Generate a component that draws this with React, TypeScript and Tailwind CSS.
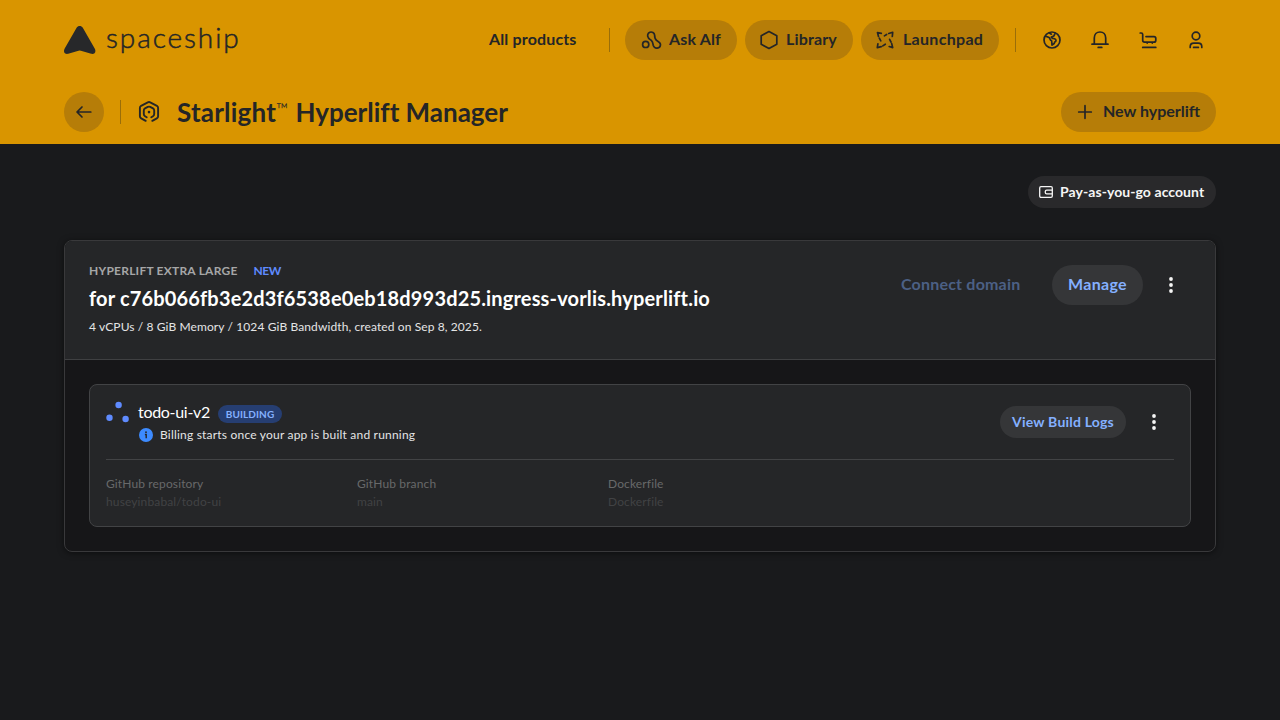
import type { ReactNode } from "react";

function Icon({ children, className = "size-6", box = "0 0 24 24", stroke = 1.7 }: { children: ReactNode; className?: string; box?: string; stroke?: number }) {
  return (
    <svg viewBox={box} className={`shrink-0 ${className}`} fill="none" stroke="currentColor" strokeWidth={stroke} strokeLinecap="round" strokeLinejoin="round">
      {children}
    </svg>
  );
}

function Kebab() {
  return (
    <Icon>
      <g fill="currentColor" stroke="none">
        <circle cx="12" cy="6" r="1.9" />
        <circle cx="12" cy="12" r="1.9" />
        <circle cx="12" cy="18" r="1.9" />
      </g>
    </Icon>
  );
}

function Divider() {
  return <div className="h-6 w-px bg-[#9a6e09]" />;
}

function Header() {
  return (
    <header className="h-36 bg-[#d99500] px-16 text-[#242527]">
      <div className="flex h-20 items-center">
        <svg viewBox="0 0 32 28" className="h-7 w-8 shrink-0 text-[#27282a]" fill="currentColor">
          <path d="M12.6 1.7C14-.5 17.4-.5 18.8 1.7L30.7 22.6C32.600 25.900 30.400 28.600 27.200 27.800L16.900 24.800Q15.700 24.400 14.500 24.800L4.200 27.800C1 28.600-1.200 25.900 .7 22.600Z" />
        </svg>
        <span className="ml-2.5 w-[137px] pb-1.5 text-[28px] leading-8 font-light tracking-[1.920px] whitespace-nowrap [-webkit-text-stroke:0.5px]">spaceship</span>
        <nav className="ml-auto flex items-center whitespace-nowrap">
          <a className="w-[88px] pb-0.5 text-base font-bold tracking-[0.150px]">All products</a>
          <div className="ml-8 mr-[15px]"><Divider /></div>
          <div className="flex gap-2 text-base font-bold">
            <button className="flex h-10 w-28 items-center rounded-full bg-[#b67d08] pl-[15px]">
              <Icon>
                <circle cx="5.700" cy="16.400" r="3.100" />
                <path d="M8.300 9.600A3.500 3.500 0 1 1 14.600 7.100C14.600 9.500 14.600 11.200 16.700 12.500C18.700 13.700 20.500 14.600 20.500 16.700A3.700 3.700 0 0 1 13.300 17.600C12.800 15.800 13.200 14.300 11.500 12.700C10.200 11.500 8.900 11 8.300 9.600Z" />
              </Icon>
              <span className="ml-[5px] pb-0.5 tracking-[0.160px]">Ask Alf</span>
            </button>
            <button className="flex h-10 w-27 items-center rounded-full bg-[#b67d08] pl-3">
              <Icon><path d="M12 3.500L19.800 7.700V16.300L12 20.500L4.200 16.300V7.700Z" /></Icon>
              <span className="ml-[5px] pb-0.5 tracking-[0.160px]">Library</span>
            </button>
            <button className="flex h-10 w-[138px] items-center rounded-full bg-[#b67d08] pl-3">
              <Icon>
                <path d="M8.300 5.300L4.500 4.500L5.500 8.500M6.300 10.200L7.800 12.800" />
                <path d="M19.300 8.500L19.700 4.300L15.700 5.500M13.600 6.500L11.400 7.900" />
                <path d="M16.200 18.500L19.700 19.600L18.700 15.600M18 14L16.600 11.300" />
                <path d="M4.900 15.800L4.300 19.600L8.200 18.600M9.800 17.900L12.300 16.200" />
              </Icon>
              <span className="ml-[6px] pb-0.5 tracking-[0.300px]">Launchpad</span>
            </button>
          </div>
          <div className="mx-4"><Divider /></div>
          <div className="flex items-center gap-6 px-2">
            <Icon>
              <circle cx="12" cy="12" r="8" />
              <path d="M5.500 8.300L8.300 9.100C9.500 9.400 10 10 10.100 11.200L10.700 12.200C12 12.500 11.900 13 11.800 14.200L12 17.200L14.200 15.500L14.700 14C16 13.500 16.300 12.500 15.700 11.600C14.800 10.400 13.600 10.300 12.300 10.400L11.400 9L13.800 8L15 5.600M9.300 5L11.400 6.200" />
            </Icon>
            <Icon><path d="M4 16.200H20M6.300 16V10C6.300 6.300 8.700 4 12 4S17.700 6.300 17.700 10V16M10.200 19.400H13.800" /></Icon>
            <Icon><path d="M4.200 5H5.200Q6.700 5 6.700 6.500V12.300Q6.700 14.200 8.600 14.200H17.800Q19.800 14.200 19.800 12.200V10.400Q19.800 8.600 18 8.600H10M11.200 14.600V15.100M16.300 14.600V15.100M6.700 19.400H19.800" /></Icon>
            <Icon><circle cx="12" cy="8" r="3.800" /><path d="M6.200 19.400V18.700Q6.200 15.100 9.800 15.100H14.200Q17.800 15.100 17.800 18.700V19.400M9.600 19.400H14.400" /></Icon>
          </div>
        </nav>
      </div>
      <div className="flex h-16 items-center">
        <button className="flex size-10 items-center justify-center rounded-full bg-[#b67d08]">
          <Icon><path d="M18.800 12H5.400M10 7L5 12L10 17" /></Icon>
        </button>
        <div className="ml-4"><Divider /></div>
        <div className="ml-4 flex">
          <Icon stroke={1.9}>
            <path d="M8.700 20.800L4.200 18.300Q2.900 17.600 2.900 16.200V7.900Q2.900 6.500 4.100 5.800L10.800 2.300Q12 1.700 13.200 2.300L19.900 5.800Q21.100 6.500 21.100 7.900V16.200Q21.100 17.600 19.800 18.300L15.300 20.800" />
            <path d="M9.700 17.200L8 16.200Q6.800 15.500 6.800 14.100V10.500Q6.800 9.100 8 8.400L10.800 6.900Q12 6.300 13.200 6.900L16 8.400Q17.200 9.100 17.200 10.500V14.100Q17.200 15.500 16 16.200L14.300 17.200" />
            <circle cx="12" cy="12.100" r="1.300" fill="currentColor" stroke="none" />
          </Icon>
        </div>
        <h1 className="ml-4 flex text-[26px] leading-8 font-bold whitespace-nowrap">
          <span className="w-[99px] tracking-[0.200px]">Starlight</span>
          <span className="w-[19.500px] text-[16px] leading-[26px] font-light [-webkit-text-stroke:0.200px]">™</span>
          <span className="tracking-[-0.010px]">Hyperlift Manager</span>
        </h1>
        <button className="ml-auto flex h-10 w-[155px] items-center rounded-full bg-[#b67d08] pl-3 text-base font-bold whitespace-nowrap">
          <Icon><path d="M12 5.700V18.300M5.700 12H18.300" /></Icon>
          <span className="ml-[6px] pb-0.5">New hyperlift</span>
        </button>
      </div>
    </header>
  );
}

const details = [
  { label: "GitHub repository", value: "huseyinbabal/todo-ui" },
  { label: "GitHub branch", value: "main" },
  { label: "Dockerfile", value: "Dockerfile" },
];

export default function App() {
  return (
    <div className="h-screen overflow-hidden bg-[#191a1c] font-['Lato',sans-serif] text-[#f5f5f5]">
      <Header />
      <main className="flex flex-col px-16 pt-8">
        <button className="flex h-8 w-[188px] items-center self-end rounded-full bg-[#29292b] pl-2.5 text-sm font-bold whitespace-nowrap">
          <Icon className="size-4" box="0 0 16 16" stroke={1.3}>
            <rect x="1.700" y="2.700" width="12.600" height="10.600" rx="1.300" />
            <path d="M14.300 6.200H8.700Q7.300 6.200 7.300 7.500V8.500Q7.300 9.800 8.700 9.800H14.300" />
          </Icon>
          <span className="ml-1.5 tracking-[0.070px]">Pay-as-you-go account</span>
        </button>

        <section className="mt-8 h-78 rounded-lg border border-[#39393b] bg-[#161618] shadow-[0_1px_6px_rgba(0,0,0,0.5)]">
          <div className="flex h-[119px] justify-between rounded-t-[7px] border-b border-[#3f4042] bg-[#252628] px-6 whitespace-nowrap">
            <div className="pt-[22px]">
              <div className="flex gap-4 text-xs leading-4 font-bold">
                <span className="w-[148.500px] tracking-[0.220px] text-[#a6a6a7]">HYPERLIFT EXTRA LARGE</span>
                <span className="tracking-[-0.500px] text-[#5f8bff]">NEW</span>
              </div>
              <h2 className="mt-[5px] text-xl leading-7 font-bold tracking-[0.160px] text-white">for c76b066fb3e2d3f6538e0eb18d993d25.ingress-vorlis.hyperlift.io</h2>
              <p className="mt-[7px] text-xs leading-4 tracking-[0.105px] text-[#e4e4e5]">4 vCPUs / 8 GiB Memory / 1024 GiB Bandwidth, created on Sep 8, 2025.</p>
            </div>
            <div className="mt-6 flex h-10 items-center self-start pr-2 text-base font-bold">
              <span className="w-[120px] pb-0.5 tracking-[0.200px] text-[#4c6085]">Connect domain</span>
              <button className="ml-[31px] h-10 w-[91px] rounded-full bg-[#353638] pb-0.5 tracking-[0.320px] text-[#84b0ff]">Manage</button>
              <div className="ml-4"><Kebab /></div>
            </div>
          </div>

          <div className="m-6 h-[143px] rounded-lg border border-[#424345] bg-[#252628] px-4 whitespace-nowrap">
            <div className="flex h-[75px] justify-between border-b border-[#424345]">
              <div className="flex">
                <svg viewBox="0 0 24 24" className="mt-4 size-6 text-[#5f8bff]" fill="currentColor">
                  <circle cx="12.600" cy="4" r="3.200" />
                  <circle cx="3.500" cy="16.700" r="3.200" />
                  <circle cx="19.600" cy="18" r="3.200" />
                </svg>
                <div className="ml-2 pt-4">
                  <div className="flex h-6 items-center">
                    <span className="w-20 pb-0.5 text-base tracking-[-0.300px] text-white">todo-ui-v2</span>
                    <span className="mt-0.5 flex h-[18px] w-16 items-center justify-center rounded-full bg-[#263e72] pb-px text-[10px] leading-none font-bold tracking-[0.100px] text-[#84b0ff]">BUILDING</span>
                  </div>
                  <div className="mt-px flex h-[18px] items-center">
                    <svg viewBox="0 0 16 16" className="size-4">
                      <circle cx="8" cy="8" r="7" fill="#3d8bff" />
                      <path d="M6.900 7.500H8.200V11.200" fill="none" stroke="#252628" strokeWidth="1.400" />
                      <circle cx="8" cy="5.200" r="0.900" fill="#252628" />
                    </svg>
                    <span className="ml-1.5 text-xs leading-4 tracking-[0.205px] text-[#e4e4e5]">Billing starts once your app is built and running</span>
                  </div>
                </div>
              </div>
              <div className="mt-[21px] flex h-8 items-center pr-2">
                <button className="h-8 w-[126px] rounded-full bg-[#353638] text-sm font-bold tracking-[0.210px] text-[#84b0ff]">View Build Logs</button>
                <div className="ml-4"><Kebab /></div>
              </div>
            </div>
            <dl className="flex pt-[15px] text-xs leading-[18px] tracking-[0.130px]">
              {details.map((d) => (
                <div key={d.label} className="w-[251px]">
                  <dt className="text-[#68696a]">{d.label}</dt>
                  <dd className="text-[#414244]">{d.value}</dd>
                </div>
              ))}
            </dl>
          </div>
        </section>
      </main>
    </div>
  );
}
